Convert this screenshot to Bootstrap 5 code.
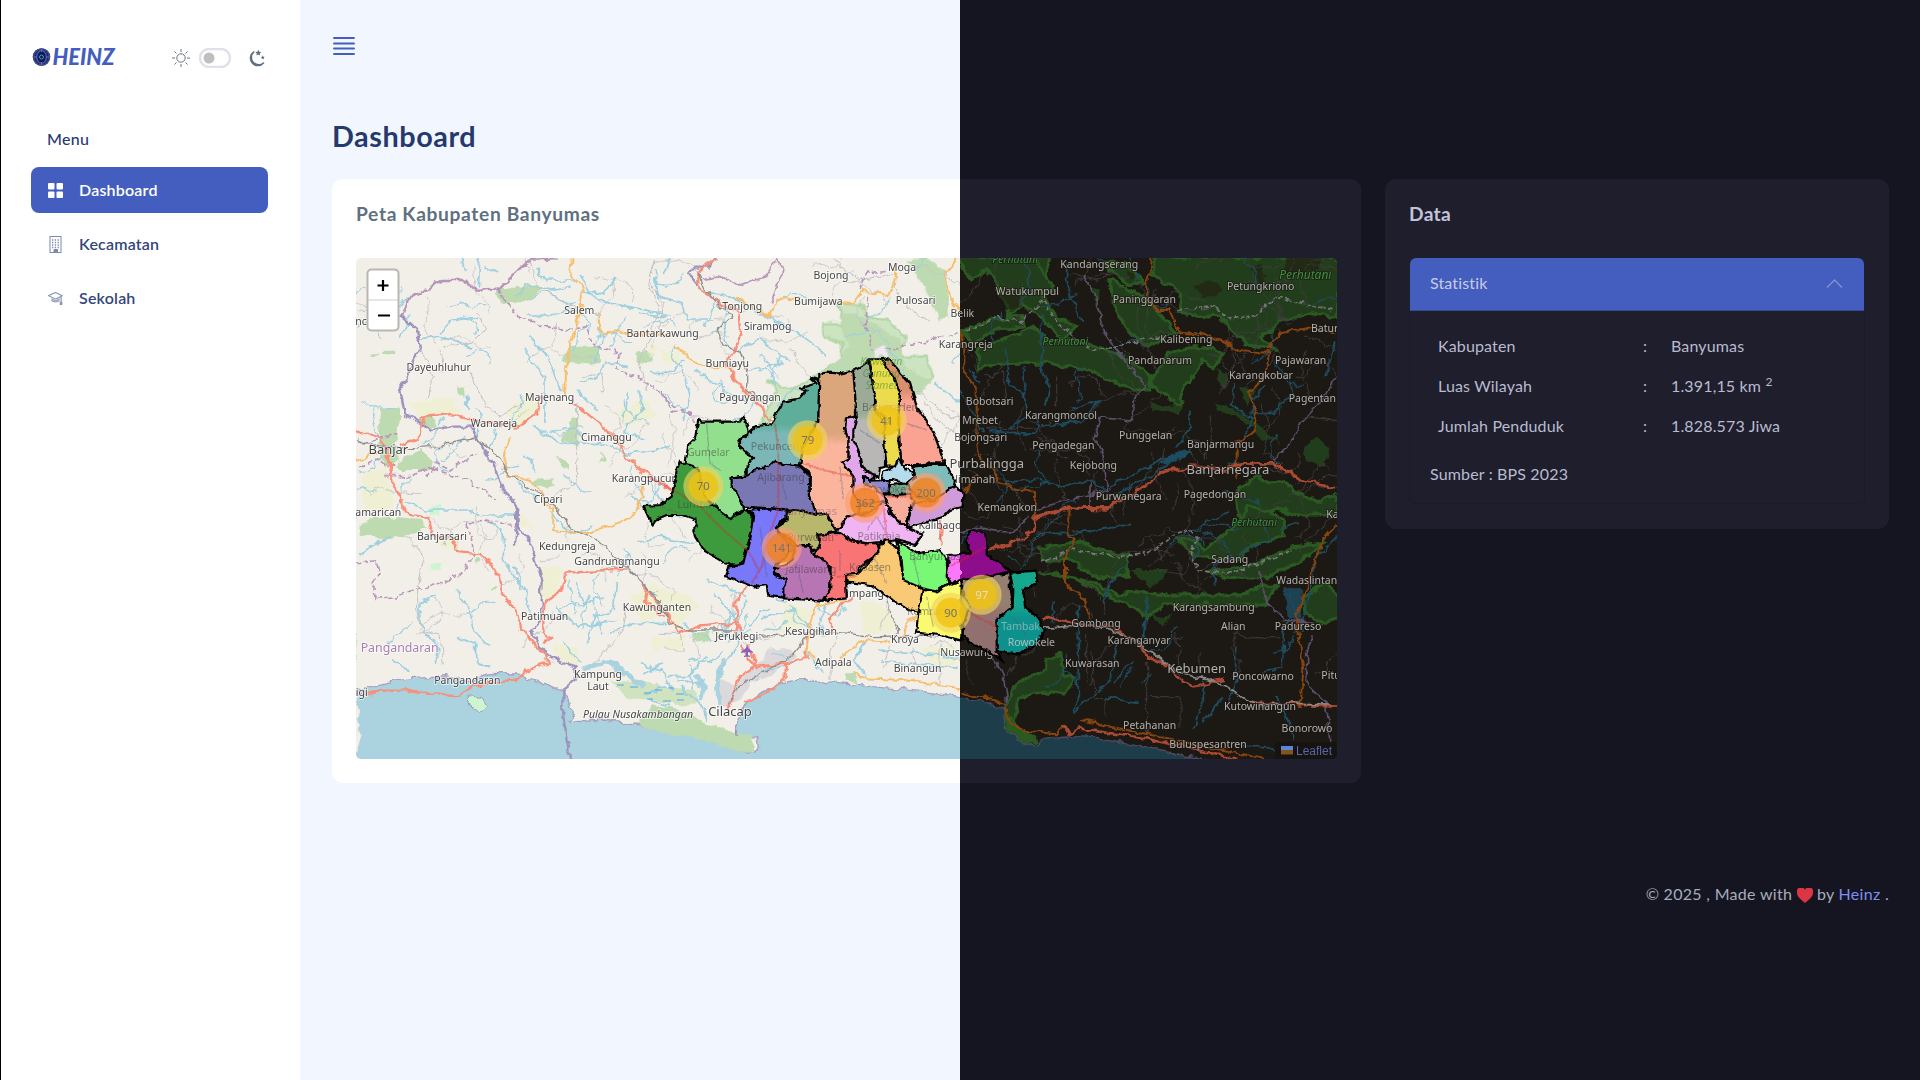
<!DOCTYPE html>
<html lang="id">
<head>
<meta charset="utf-8">
<meta name="viewport" content="width=device-width, initial-scale=1">
<title>Dashboard</title>
<link href="https://cdn.jsdelivr.net/npm/bootstrap@5.3.0/dist/css/bootstrap.min.css" rel="stylesheet">
<style>
body{font-family:Lato,"Open Sans",sans-serif;font-size:16px;letter-spacing:.15px;color:#b9bbcf;background:linear-gradient(90deg,#f2f7ff 960px,#151521 960px);height:1080px;overflow:hidden}
.side{width:300px;height:1080px;background:#fff;border-left:1px solid #000;padding:42px 34px 0 30px}
.brand{width:87px;height:32px}
.brand-name{font:italic 900 22px Lato,sans-serif;fill:#435ebe;letter-spacing:0}
.side-item{width:237px;height:46px;margin-bottom:8px;border-radius:8px;padding:0 17px;color:#34467a;font-weight:600;letter-spacing:.2px;gap:16px}
.side-item.on{background:#435ebe;color:#fff}
.side-title{color:#25396f;padding-left:16px;margin:51px 0 15px;font-weight:500;line-height:27px;letter-spacing:.3px}
.main-col{padding:32px 31px 0 32px}
.page-title{font-size:28.8px;font-weight:700;color:#25396f;line-height:34px;margin:59px 0 26px;letter-spacing:.55px}
.panel{border-radius:11px}
.panel-map{width:1029px;height:604px;padding:24px;background:linear-gradient(90deg,#fff 628px,#1e1e2d 628px)}
.panel-data{width:504px;height:350px;padding:24px;background:#1e1e2d}
.panel-head{font-size:19.2px;font-weight:700;line-height:22px;margin-bottom:33px;letter-spacing:.65px}
.map-box{width:981px;height:501px;border-radius:5px;display:block;letter-spacing:0}
.acc-head{height:53px;margin:0 1px;background:#435ebe;border-bottom:1px solid #374b94;border-radius:6px 6px 0 0;padding:0 20px;color:#c8cbe5;padding-bottom:3px}
.acc-body{border:1px solid #1b1b29;border-top:0;border-radius:0 0 6px 6px;height:193px;padding:15px 20px}
.stat-row{height:40px;padding:0 8px}
.stat-row span:nth-child(1){width:198px}
.stat-row span:nth-child(2){width:35px;padding-left:7px}
.stat-row sup{font-size:12px}
.foot{margin-top:99px;color:#a5adbb;letter-spacing:.3px}
.foot span{color:#7e8ff0}
text{font-family:"Noto Sans",sans-serif}
.lb{font-size:31.5px;text-anchor:middle;fill:#444;stroke:#fff;stroke-opacity:.75;stroke-width:5;paint-order:stroke}
.dk{fill:#b4b2b0;stroke:#1a1612;stroke-opacity:.8}
.faint{fill:#3a3a3a;fill-opacity:.5;stroke:none}
.big{font-size:39px}
.riv{fill:none;stroke:#9ccfe0;stroke-width:5}
.rdk{fill:none;stroke:#1f4d60;stroke-width:5}
.road{fill:none;stroke:#c3c1c5;stroke-width:3}
.rodk{fill:none;stroke:#3e3b3d;stroke-width:3}
.pri{fill:none;stroke:#f98f78;stroke-width:7}
.sec{fill:none;stroke:#f7be6c;stroke-width:6}
.bor{fill:none;stroke:#b795b8;stroke-width:5}
.bnd{fill:none;stroke:#9d93bd;stroke-width:7}
.rail{fill:none;stroke:#8f8d8b;stroke-width:4}
.wood{fill:#bddab1}.yel{fill:#eff0d3}
.dw{fill:#243d1b;stroke:#2b5a22;stroke-width:9}
.dsec{fill:none;stroke:#87440f;stroke-width:6}
.dpri{fill:none;stroke:#ab4a33;stroke-width:8}
.dbor{fill:none;stroke:#5b5069;stroke-width:5}
.dst path{stroke:#000;stroke-width:6.5;stroke-linejoin:round}
.num{font:34px "Noto Sans",sans-serif;text-anchor:middle;fill:#73726c}
</style>
<script src="https://cdn.jsdelivr.net/npm/bootstrap@5.3.0/dist/js/bootstrap.bundle.min.js"></script>
</head>
<body>
<div class="d-flex">
<aside class="side flex-shrink-0">
  <div class="d-flex align-items-center">
    <svg class="brand" viewBox="0 0 87 32"><circle cx="10.500" cy="15" r="8.700" fill="#27276d"/><circle cx="10.500" cy="15" r="8" fill="none" stroke="#32517f" stroke-width="1.500"/><ellipse cx="10.500" cy="15" rx="4.800" ry="6.300" fill="#15144c" stroke="#435ebe" stroke-width="1.300"/><circle cx="10.500" cy="15" r="2" fill="none" stroke="#21b5b0"/><path d="M10.500 7v3M10.500 20v3M3 15h3M15 15h3" stroke="#8358c6"/><text class="brand-name" x="21.500" y="23" textLength="62" lengthAdjust="spacingAndGlyphs">HEINZ</text></svg>
    <div class="d-flex align-items-center ms-auto">
      <svg width="20" height="20" viewBox="0 0 20 20" fill="none" stroke="#6c757d"><circle cx="10" cy="10" r="4.200"/><path d="M10 1v3M10 16v3M1 10h3M16 10h3M3.500 3.500l2 2M14.500 14.500l2 2M3.500 16.500l2-2M14.500 5.500l2-2"/></svg>
      <svg class="ms-2" width="32" height="20" viewBox="0 0 32 20"><rect x="1" y="1" width="30" height="18" rx="9" fill="#fff" stroke="#dfe2ea" stroke-width="2.500"/><circle cx="10" cy="10" r="5.500" fill="#bfbfbf"/></svg>
      <svg style="margin-left:17px" width="18" height="20" viewBox="0 0 18 20"><path d="M5.800 4A7 7 0 0 0 15.500 15 7.400 7.400 0 1 1 5.800 4z" fill="none" stroke="#607080" stroke-width="1.600" stroke-linejoin="round"/><path d="M10.300 1.800l.9 1.900 2 .3-1.400 1.400.3 2-1.800-1-1.800 1 .3-2L7.400 4l2-.3zM14.800 7.600l.6 1.200 1.200.3-.9.900.2 1.200-1.100-.5-1.100.5.200-1.200-.9-.9 1.200-.3z" fill="#607080"/></svg>
    </div>
  </div>
  <div class="side-title">Menu</div>
  <nav>
    <div class="side-item on d-flex align-items-center"><svg width="15" height="15" viewBox="0 0 15 15" fill="#fff"><rect width="6.500" height="6.500" rx="1"/><rect x="8.500" width="6.500" height="6.500" rx="1"/><rect y="8.500" width="6.500" height="6.500" rx="1"/><rect x="8.500" y="8.500" width="6.500" height="6.500" rx="1"/></svg>Dashboard</div>
    <div class="side-item d-flex align-items-center"><svg width="15" height="17" viewBox="0 0 15 17" fill="none" stroke="#7c88b0"><rect x="2" y=".5" width="11" height="16"/><path d="M4 4h7.500M4 6.500h7.500M4 9h7.500M4 11.500h7.500" stroke-width="1.400" stroke-dasharray="1.300 1.500"/><path d="M6 16v-2.500h3.500V16" fill="#7c88b0"/></svg>Kecamatan</div>
    <div class="side-item d-flex align-items-center"><svg width="15" height="15" viewBox="0 0 16 15"><path d="M8 1L.5 4.500 8 8l6-2.700V12M8 1l7 3.500-1 .8" fill="none" stroke="#8792b6" stroke-width="1.200"/><path d="M3.500 7L8 9l4.500-2v3.500Q8 13 3.500 10.500z" fill="#a4adc7"/><path d="M12.500 11h2.800v3.500h-2.800z" fill="#8792b6"/></svg>Sekolah</div>
  </nav>
</aside>
<main class="main-col flex-grow-1">
  <svg class="d-block" width="24" height="28" viewBox="0 0 24 28"><path d="M2 6h20M2 11.500h20M2 16.500h20M2 22h20" stroke="#435ebe" stroke-width="1.900" stroke-linecap="round"/></svg>
  <h3 class="page-title">Dashboard</h3>
  <div class="d-flex justify-content-between align-items-start">
    <section class="panel panel-map">
      <div class="panel-head" style="color:#607080">Peta Kabupaten Banyumas</div>
      <svg class="map-box" viewBox="356 258 981 501">
        <defs>
          <filter id="wob" filterUnits="userSpaceOnUse" x="-1200" y="-100" width="3400" height="1300"><feTurbulence type="fractalNoise" baseFrequency=".09" numOctaves="3" seed="4"/><feDisplacementMap in="SourceGraphic" scale="8.500" xChannelSelector="R" yChannelSelector="G"/></filter>
          <filter id="wob2" filterUnits="userSpaceOnUse" x="-100" y="-100" width="1500" height="1300"><feTurbulence type="fractalNoise" baseFrequency=".05" numOctaves="3" seed="9"/><feDisplacementMap in="SourceGraphic" scale="14" xChannelSelector="R" yChannelSelector="G"/></filter>
          <clipPath id="cl"><rect x="300" y="200" width="660" height="600"/></clipPath>
          <clipPath id="cr"><rect x="960" y="200" width="400" height="600"/></clipPath>
        </defs>
        <rect x="356" y="258" width="604" height="501" fill="#f2efe9"/>
        <rect x="960" y="258" width="377" height="501" fill="#1c1814"/>

        <!-- light half -->
        <g clip-path="url(#cl)">
          <g filter="url(#wob)">
            <g transform="translate(350,250) scale(.33333)">
              <path class="yel" d="M180 460l120-20 40 50-130 20zM470 480l80-60 10 60-60 60zM30 680l80-30 20 130H40zM800 480l90-30 30 50-100 30z"/>
              <path class="wood" d="M440 112l60 5 60-20 20 20-50 40-80 0zM90 480l60-10 0 40-20 70 20 50-40 20-25-60zM210 510l40-10 10 30-50 0zM140 640l70-40 40 40-20 20-90 0zM660 290h90v50h-100l-15-10zM665 500l20 0 0 90-45-20zM860 310l50 0 0 25-50-5zM620 620l40 20 0 20-30-15zM750 600l20 30-15 5zM320 410l20-5 5 35-20-10zM550 690l60-5 0 25-50 0zM65 310h20v8h-20zM100 305h30v10h-30z"/>
            </g>
            <g transform="translate(350,500) scale(.33333)">
              <path class="wood" d="M25 75l60-25 130 10 15 20-60 30-80 10-60-15zM375 178h12v12h-12zM423 262h12v12h-12z"/><path fill="#cdf5cf" d="M242 20h26v25h-26zM242 188h26v27h-26z"/>
              <path class="yel" d="M570 200l70 0-20 80-50 30zM500 30l60 60-50-20zM840 290l80-40 40 80-90 40zM610 430l80 20-10 50-60-30zM260 115l60 0 10 40-50-5z"/>
            </g>
            <g transform="translate(640,250) scale(.33333)">
              <path d="M380 480l30-60-30-30 80 30 80-50 60-40 10-50-60-20 0-40 60 0-10-60 60 0 30 40 60 10 50 60-20 50 80 0 20 60-50 30-60 70-60-20-280 10-80 90z" fill="#cde4c3" stroke="#b3d6a6" stroke-width="7"/>
              <path class="wood" d="M610 190l60 10 60 40 50 30 20 80 60 40-20 50-100-20-100-40-100 30 30-60 60-60-30-50zM800 30l60-10 60 50 10 130-30 10-60-120z"/><path d="M700 300l25-12 22 15-5 18-40 0z" fill="#eee9f0"/>
              <path class="yel" d="M60 300l60 10 0 30-50-5zM20 280l40 10-30 30z"/>
            </g>
            <g transform="translate(640,500) scale(.33333)">
              <path class="yel" d="M60 270l80 10 40 40-80 60-40-40zM40 410l100 0-20 40h-80zM440 310l80 20-40 60h-60zM660 300l100 30 0 70-90 0zM850 440l100 0v60l-90-10z"/>
              <path d="M380 450l60-10 30 30-80 60-60 20zM240 540l50 10 40-50 40-10-70 110-60 30z" fill="#dcd9dc"/>
              <path class="wood" d="M160 400l50-8-10 35h-40zM615 520l30 0 10 30-35-5z"/>
              <path d="M-870 575L-760 548-680 535-580 530-510 545-450 520-370 522-300 545-260 562-230 575-215 600-205 640-215 660-180 665-110 660-30 672 90 695 140 705 220 725 330 760 355 740 350 710 300 715 290 690 290 660 320 610 360 580 440 545 500 535 560 548 700 560 850 575 980 592V860H-890z" fill="#aad3df" stroke="#a9a0bd" stroke-width="4"/>
              <path d="M-860 560l20 60-10 50 15 30-15 60-40 30v-220z" fill="#f2efe9"/>
              <path class="wood" d="M-5 655l50-40 100 20 60 40 80 25 50 5 5 50-20 3-110-30-120-25-95-28z"/>
              <path d="M-520 590l45 5 15 25-18 18-30-15z" fill="#cdf5cf" stroke="#99b" stroke-width="3"/>
              <path d="M-90 545l100 5 60 10 100 10 0 40-60 5-70-15-70-5z" fill="#cfe3bf"/>
              <path d="M-170 510l60-25 40 5 20 30 60 40M250 480l-20 80 10 60M170 520l20 50-10 30" fill="none" stroke="#aad3df" stroke-width="16"/>
            </g>
            <g id="texL"></g>
            <g transform="translate(350,250) scale(.33333)">
              <path class="riv" d="M330 20l15 40M390 20l-5 90M400 50l40 20M500 145l30-45 70 20 60-10M540 150l40-25 90 40-60 30-80 0M560 60l30 30 90 0M690 75l30 60 40-10 40-35M700 125l60 30 200 40M915 80l10 60 40 10M210 270l50-10 70 15 40 20M270 250l50-50 60 5M535 260l60 60 20 60 25 40M525 290l20 40 40 50 0 60 0 80M550 520l40 40 60 20 100 0 80 30 130-20M690 400l50-20 30-40 60 10M680 420l60 60M830 430l-10 90M870 420l10 60-60 60 60 30M520 620l30 20 0 30M350 440l5 40M500 700l60 50M420 600l20-60M840 730l40 40M180 200l-30 60"/>
              <path class="bnd" d="M150 195l50 40 10 60-25 60-35 60 15 80 40 20 40 25 60-10 60 0 30 60 40 60 20 70 50 50-10 120"/>
              <path class="bnd" style="stroke:#b795b8" d="M155 195l15-45 110-60 60 0 30 30 80-5 60-60 30-25 80-5"/>
              <path class="bor" stroke-dasharray="16 7" d="M450 115l10 30 50 60 140 35 60-10 20 60 80 20-10 50 80 30 100 80M40 580l100-30M100 680l90 0 40-30 120 40 90 60M230 680l30-40 40 20 80-50M30 650l60-20 40 20"/>
              <path class="sec" d="M665 20l-5 60 38 35-8 70-25 80-15 60-5 110M740 190l15 55 200 10M20 630l60-20M480 560l-20 70 15 50 70 10 60 90M880 700l-10 80"/>
              <path class="pri" d="M18 540l60 20 30 30 20 110 35 70M150 585l55-20 15-60 80-10 90 20 110 18 60-40 10-55M670 460l80 60 60 60 20 40 70 60 60 40"/>
              <path class="rail" d="M18 570l100 25 130-5 130-25 60 50 40 60 150 100"/>
              <path class="road" d="M540 30l20 70 120 80M910 30l-10 80 30 60-60 160 20 90M280 290l80-10 50-40-30-50M270 300l10 70M360 370l50 100 40 30 90-60M210 290l40 90-20 60M680 460l0 240-90 50M700 380l60-10 0 60"/>
            </g>
            <g transform="translate(350,500) scale(.33333)">
              <path class="riv" d="M30 160l90-50M170 10l60 20 120 0 60 15 90 0M410 60l50 40 0 80 70 100 10 60M490 200l20 30 0 40M260 285l-50 20 0 70 50 60 0 60M320 270l40 60 10 60 50 50M320 410l60 20 0 60 40 10M130 480l50 30M600 40l70 60 60-20M680 250l20 60 60-20M800 240l-10 90-60 20-20 80M620 320l60 60 120-20M640 430l50 60M780 400l80-30 90 0M880 520l60-30M880 580l70-20"/>
              <path class="bnd" d="M495 0l10 80 40 60 30 100-5 120-30 30 30 50 50 40 60 20 0 40-40 30 0 80 20 130"/>
              <path class="bor" stroke-dasharray="16 7" d="M18 195l60-10 10 30-15 30 5 50 60-5 80-25 110-40 45-60-20-100 90 0 60 20"/>
              <path class="pri" d="M160 0l0 40 75 15 10 50 60 5 15 42 75 10 55 70 10 50 40 50 10 50 50 60 30 20 0 30-60 20-30 30-60 5-60 10-50 30-150-15-80 0-100 20-80 30M580 430l20-20-20-10 0-90 60-40 5-55 120-5 70 2M890 275l-5 30 60 50"/>
              <path class="sec" d="M610 20l-5 70 120 10 80-30 60-40 10-30"/>
              <path class="rail" d="M610 15l60 75 70 30 100 90 110 120"/>
              <path class="road" d="M170 110l50 60-20 130 10 80 60 30 10 80M280 140l20-50 60-30M830 320l-10 70-40 50-50 50"/>
            </g>
            <g transform="translate(640,250) scale(.33333)">
              <path class="riv" d="M50 60l0 70 70 30 20 50 80 0M200 130l80 10 100 60 80 40 60 40 40 40M100 20l-30 50M30 370l60 0 40-40M160 360l100 60 60 40M130 360l20 80-20 70M280 300l80-30 60 40 30 20M880 400l80 60M0 190l80 10"/>
              <path d="M230 20l-20 30-50 0-15 20 40 50" class="bnd"/>
              <path class="bor" d="M180 90l60-10 60 25 80-25 30-50 20 30-40 100"/>
              <path class="bor" stroke-dasharray="16 7" d="M660 120l20-50 60-10M685 140l-5 90 20 70M740 300l100-20 120-30M60 420l40 60 50 10 20 30"/>
              <path class="sec" d="M100 290l60 40 50 25 80 0M290 140l100 60 20-50 70-5M570 150l70 10 30-40 70 15 25-30 5-60M950 25l-35 50 20 70 40 70"/>
              <path class="pri" d="M235 25l-60 40 0 50 60 40 60 30 5 60-20 60-20 40 20 40 120 130"/>
              <path class="rail" d="M175 70l20 50 80 80-40 40 15 50 50 10 20 60 0 60 60 50"/>
              <path class="road" d="M40 30l-10 70 40 60-10 100M580 30l80 60 100-20M760 100l30 60 80 60M450 300l60 80M830 420l80 70 50 20M850 450l40 60 60 40"/>
            </g>
            <g transform="translate(640,500) scale(.33333)">
              <path class="riv" d="M0 130l60-20 80 20 30-10M200 240l60 20 60 30M220 280l60 60 10 40 0 60-50 80M250 450l-40 40-60-10M360 360l100-30 60 60M560 310l-20 60 10 40M450 320l20 50 40 10M200 470l-60 60-70 0M680 420l-40 60 40 50M720 450l120 10 110 10M720 480l230 25M500 460l50 60M330 130l-10 60M0 490l60 20 40 60M30 600l60 20M120 560l60 50 20 50"/>
              <path class="bnd" d="M292 690l5 20"/>
              <path class="pri" d="M0 250l70 80 50 70 50-20 100-10 30 0M285 400l10-60-15-30 45-55 40-90M330 430l20 60-50 35-15 50-20 60M300 440l50 60 90-10 0 40-60 50-70 30M430 495l70-15 0-70M640 290l-70 60 0 30M910 80l-10 60M290 370l20 50"/>
              <path class="sec" d="M620 300l-90 20-20 50-10 80 30 30M600 475l70-55 80 5M640 515l30 20 120 5 170 25M840 340l-40 30-10 50"/>
              <path class="rail" d="M0 240l60 70 30 60 50 20 140 0M350 410l230-15 120 15 180-5M500 410l-60 70-80 40-60 40-40 60M710 220l65 180"/>
              <path class="road" d="M60 400l60 0 10 50-60 0M720 260l30 60-30 70M600 400l-30 60 0 80M860 400l100 20M750 430l-20 70M820 440l0 60M900 430l0 120"/>
            </g>
          </g>
          <g stroke="#4aa5ee" stroke-width="1"><path d="M617 685h7M630 687h8M655 690h7M668 688h6M676 694h8M663 701h8M644 693h7M647 699h6M677 700h7"/></g>
          <path d="M747 644l1 4 5 4v1l-5-1v3l2 1v1l-3-.500-3 .500v-1l2-1v-3l-5 1v-1l5-4z" fill="#8461c4"/>
        </g>

        <!-- dark half -->
        <g clip-path="url(#cr)">
          <g filter="url(#wob)">
            <g transform="translate(950,250) scale(.33333)">
              <path class="dw" d="M20 20h230l60 90-30 30 40 60 60 30-40 40-60-60-60-50-40 40-20-60-50-80-50 30zM250 20h50l-10 60zM40 240l80-30 100-10 0 30-80 10-80 40zM85 300l120-50 50-20 40 40 120 10 130 50 60 50 0 40-60 0-130-60-120-20-170 0-40 20zM465 40l60 0 60 60-60 0zM480 90l100 50 60 60 40 50-90 40-60-50-40-80zM620 20h545v180l-90-10-80 20-60 50 40 40-90-20-80-80-120-10 10-60-90-60zM600 400l60-100 60-10 60 0 40 20-30 50-30-30-60 90-10 50z"/>
              <path d="M1000 20l10 60 100-20 0-40zM730 110l60-20 30 30-60 30zM900 60l30-20 20 40-20 20zM130 130l60-10 30 50-60 10zM530 60l30 20-20 10z" fill="#1c1814" opacity=".5"/>
              <path fill="#243d1b" d="M600 460l100 10-10 20-80-10zM800 460l80 30 110 90-60-20-70-60-60-20zM1060 590l40-30 40 30-20 60-50-20zM800 360l30 10-10 50zM870 410l50 10-30 50zM420 110l30 10-10 50z"/>
              <path class="dw" d="M860 720l60-45 20 20 60 0 40 30 60 30 60-20v60l-120 0-60-20-60 40H870z"/>
            </g>
            <g transform="translate(950,500) scale(.33333)">
              <path class="dw" d="M265 145l130-20 70 30 70 10 0 60-90 10-90-60-80 10zM265 215l100 20 80 20 60 30 60-10 90 10 220 0 60-30 50 0-40 60-180 0-120 0-60 40-20-30-80-30-110-60zM680 120l60 0 20 30 80-60 60-70 100 30 0 60-80 20-60 50-120-10zM780 210l120-10 130-60 90-10-60 50-130 60-110-10zM1060 290l60-40 45 30v70l-40 20-60-30zM170 640l10-60 50-50 60-20 0-30 40-15 10 60 35 10-30 50-60-10-80 20-10 80 60 40-40 20-55-60z"/>
              <path fill="#243d1b" d="M540 210l120 0-60 50zM600 340l60 10-20 30z"/>
              <path d="M20 587L120 610 170 628 160 680 200 722 260 738 285 715 350 708 420 712 560 737 680 762 770 782V830H0z" fill="#1d3e49" stroke="#4d4a63" stroke-width="4"/>
              <path d="M165 640l5 40 40 42 55 12-10-20-50-30-20-40z" fill="#2b5a22"/>
              <path fill="#1f4353" d="M1000 265l60 0-10 100-40-15z"/>
            </g>
            <g id="texR"></g>
            <g transform="translate(950,250) scale(.33333)">
              <path class="rdk" d="M220 20l20 90-30 50M350 40l0 50 30 100 20 30M275 190l0 160 20 60-10 60M165 290l10 60 0 50 50 40 10 60-60 30M220 350l10 130M120 545l140 5 0-50M270 525l120-10 60-60-80 20M170 700l100-10 80 20 60-20 60 30 100-60 130-60 30 10M720 480l0 50-40 60M1155 270l-30 110M850 400l0 70 60 30-30 70M940 410l-30 40 0 40 60 0 50-50M830 640l130 0M20 400l80 150M60 360l30 40M500 730l60-30 120-70M1020 380l10 60"/>
              <path d="M630 640l30-25 70-20-20 20-50 25z" fill="#1f4d60"/>
              <path class="dbor" d="M400 70l40 80 20 100 130 160-35 30-10 70-90-10-20 60 20 50 15 110-110 30-120 30M1160 380l-50 80-60 60-20 50-60 60M420 700l0 70"/>
              <path class="dbor" stroke-dasharray="14 7" style="stroke:#74767c" d="M50 240l100-40 60 20 70-70 30 50 60 60 60 40 80-10 60-20 60-10M680 180l120-10 30 40 90-10 50-60 180 40"/>
              <path class="dsec" d="M605 20l-15 110 30 50 40 0 30 70 60 0 60 20 60 30 90 10-10 60-50 60 20 60-10 60-50 30 0 110M950 300l40-50 100-20 60 20M20 180l20 80 0 100 40 60 0 150 15 80 40 0 0 50 120 30 0 70M80 670l-40 60"/>
              <path class="dpri" d="M250 805l100-30 120 0 90-50 80-60 80-15 100 5 60-15 90 0 80 50 110 25"/>
              <path class="rodk" d="M70 540l200-10 100-50 60 30M240 600l200 0M260 560l150 60 10 60M30 430l-10-40M100 380l60-10 10 80M320 380l0 90M640 600l-20 90 30 60M780 500l10 70-30 60M690 700l-20 90M540 700l-20 90M1060 500l100 10M940 600l20-80-30-60M850 290l0 80-30 40"/>
            </g>
            <g transform="translate(950,500) scale(.33333)">
              <path class="rdk" d="M260 100l60 0 60 0 100-20 60 0M310 310l0 60M385 310l0 290-20 40M500 430l-20 110-110 100M550 480l-60 70M590 290l-10 130M460 590l100 20M540 180l-60 70-20 60M760 540l0 60-30 90M820 590l-60 80M940 520l60-20 0-100 20-50M860 430l0 120-40 80M1060 370l40-200 60-60M980 590l40 80 10 50M1080 560l60 60M800 260l-10-60 180-90M880 740l60 0 30 20M740 120l0 60M990 90l60-20"/>
              <path class="dbor" d="M30 100l60-20 90 20 60-50M930 210l10 80 60 70 90 10M1090 400l-20 60 0 90 60 60 10 120M130 470l30 60 10 80"/>
              <path class="dbor" stroke-dasharray="14 7" style="stroke:#77777c" d="M270 190l100-40 130 20 100-10 60-50 60-20 30 30-30 30 30 60 100 10 180-70"/>
              <path class="dsec" d="M355 25l0 80 20 10-30 60 0 80 60 40 10 60M1160 70l-40 50-30 80-30 90-20 60 10 80 10 80-10 120M40 575l130 38 10 60 60 20 80 10 30-30M390 660l560 118"/>
              <path class="dpri" d="M110 148l80-20 60-35 10-45 100-25 110 5 50-25M45 370l70 15M275 360l20-12 100 28 90 5 80 50 30 40 50 20 50 55 40 10 90-20M345 675l10 25 30-15 200 30 280 62M900 608l265 12"/>
              <path class="rail" style="stroke:#888;stroke-width:5" d="M285 385l60-5 100 0 90 30 60 40 80 60 90 25 60 20 60 40 40 15 220 5"/>
              <path class="rodk" d="M210 50l0 110 80 10M410 400l0 150M425 450l10 140 30 10 0 50M590 480l0 220M750 460l0 60M680 400l10 150M600 590l90 0 0 90M640 420l60-10M200 470l-30 60M500 180l-30 90M850 400l60 20 80-10M480 20l20 50M600 120l40 60"/>
            </g>
          </g>
        </g>

        <!-- place labels -->
        <g transform="translate(350,250) scale(.33333)">
          <text class="lb" x="42" y="225">nca</text><text class="lb" x="688" y="192">Salem</text><text class="lb" x="266" y="362">Dayeuhluhur</text><text class="lb" x="599" y="452">Majenang</text><text class="lb" x="432" y="532">Wanareja</text><text class="lb big" x="115" y="613">Banjar</text><text class="lb" x="769" y="573">Cimanggu</text><text class="lb" x="894" y="696">Karangpucung</text><text class="lb" x="594" y="759">Cipari</text>
          <text class="lb" x="938" y="260">Bantarkawung</text>
        </g>
        <g transform="translate(350,500) scale(.33333)">
          <text class="lb" x="85" y="48">amarican</text><text class="lb" x="276" y="121">Banjarsari</text><text class="lb" x="652" y="150">Kedungreja</text><text class="lb" x="801" y="194">Gandrungmangu</text><text class="lb" x="584" y="359">Patimuan</text><text class="lb" style="font-size:37px;fill:#a77fae" x="149" y="457">Pangandaran</text><text class="lb" x="352" y="552">Pangandaran</text><text class="lb" x="35" y="589">igi</text><text class="lb" x="744" y="533">Kampung</text><text class="lb" x="744" y="570">Laut</text><text class="lb" font-style="italic" x="864" y="655">Pulau Nusakambangan</text><text class="lb" x="921" y="334">Kawunganten</text>
        </g>
        <g transform="translate(640,250) scale(.33333)">
          <text class="lb" x="573" y="87">Bojong</text><text class="lb" x="786" y="64">Moga</text><text class="lb" x="307" y="180">Tonjong</text><text class="lb" x="535" y="164">Bumijawa</text><text class="lb" x="827" y="163">Pulosari</text><text class="lb" x="383" y="241">Sirampog</text><text class="lb" x="262" y="352">Bumiayu</text><text class="lb" x="330" y="453">Paguyangan</text>
        </g>
        <g transform="translate(640,500) scale(.33333)">
          <text class="lb" x="290" y="420">Jeruklegi</text><text class="lb" x="513" y="404">Kesugihan</text><text class="lb" x="795" y="430">Kroya</text><text class="lb" x="580" y="497">Adipala</text><text class="lb" x="833" y="515">Binangun</text><text class="lb big" x="270" y="649">Cilacap</text><text class="lb" x="662" y="290">Sampang</text>
        </g>
        <g transform="translate(950,250) scale(.33333)">
          <text class="lb dk" style="fill:#409044" font-style="italic" x="195" y="40">Perhutani</text><text class="lb dk" x="448" y="55">Kandangserang</text><text class="lb dk" x="232" y="136">Watukumpul</text><text class="lb dk" x="583" y="158">Paninggaran</text><text class="lb dk" x="932" y="119">Petungkriono</text><text class="lb dk" style="fill:#409044;font-size:36px" font-style="italic" x="1066" y="86">Perhutani</text><text class="lb dk" style="fill:#409044" font-style="italic" x="346" y="284">Perhutani</text><text class="lb dk" x="709" y="279">Kalibening</text><text class="lb dk" x="1124" y="247">Batur</text><text class="lb dk" x="630" y="342">Pandanarum</text><text class="lb dk" x="1052" y="341">Pajawaran</text><text class="lb dk" x="933" y="388">Karangkobar</text><text class="lb dk" x="1087" y="456">Pagentan</text><text class="lb dk" x="119" y="465">Bobotsari</text><text class="lb dk" x="90" y="523">Mrebet</text><text class="lb dk" x="333" y="506">Karangmoncol</text><text class="lb dk" x="587" y="568">Punggelan</text><text class="lb dk" x="340" y="598">Pengadegan</text><text class="lb dk" x="812" y="594">Banjarmangu</text><text class="lb dk" x="430" y="656">Kejobong</text><text class="lb dk big" x="834" y="671">Banjarnegara</text><text class="lb dk" x="536" y="751">Purwanegara</text><text class="lb dk" x="795" y="745">Pagedongan</text><text class="lb dk" x="172" y="783">Kemangkon</text><text class="lb dk" x="1147" y="803">Ka</text>
        </g>
        <g transform="translate(950,500) scale(.33333)">
          <text class="lb dk" style="fill:#409044" font-style="italic" x="912" y="79">Perhutani</text><text class="lb dk" x="839" y="190">Sadang</text><text class="lb dk" x="1080" y="253">Wadaslintang</text><text class="lb dk" x="791" y="334">Karangsambung</text><text class="lb dk" x="850" y="391">Alian</text><text class="lb dk" x="1044" y="390">Padureso</text><text class="lb dk" x="438" y="380">Gombong</text><text class="lb dk" x="567" y="433">Karanganyar</text><text class="lb dk" x="427" y="500">Kuwarasan</text><text class="lb dk big" x="740" y="519">Kebumen</text><text class="lb dk" x="939" y="541">Poncowarno</text><text class="lb dk" x="1143" y="536">Pitu</text><text class="lb dk" x="930" y="630">Kutowinangun</text><text class="lb dk" x="599" y="686">Petahanan</text><text class="lb dk" x="1071" y="697">Bonorowo</text><text class="lb dk" x="774" y="745">Buluspesantren</text>
        </g>
        <g clip-path="url(#cl)"><g transform="translate(950,250) scale(.33333)"><text class="lb" x="37" y="202">Belik</text><text class="lb" x="47" y="293">Karangreja</text><text class="lb" x="92" y="573">Bojongsari</text><text class="lb big" x="110" y="653">Purbalingga</text><text class="lb" x="57" y="700">Kalimanah</text><text class="lb" x="-24" y="837">Kalibagor</text><text class="lb" x="60" y="1219">Nusawungu</text></g></g>
        <g clip-path="url(#cr)"><g transform="translate(950,250) scale(.33333)"><text class="lb dk" x="37" y="202">Belik</text><text class="lb dk" x="47" y="293">Karangreja</text><text class="lb dk" x="92" y="573">Bojongsari</text><text class="lb dk big" x="110" y="653">Purbalingga</text><text class="lb dk" x="57" y="700">Kalimanah</text><text class="lb dk" x="60" y="1219">Nusawungu</text></g></g>

        <!-- districts -->
        <defs>
          <linearGradient id="g1" x2="0" y2="1"><stop offset=".48" stop-color="#5fae99"/><stop offset=".56" stop-color="#7ab7b6"/></linearGradient>
          <linearGradient id="g2" x2="0" y2="1"><stop offset=".4" stop-color="#dca67c"/><stop offset=".47" stop-color="#fab59c"/></linearGradient>
          <linearGradient id="g3" x2="0" y2="1"><stop offset=".46" stop-color="#9bab98"/><stop offset=".52" stop-color="#b9b7b5"/></linearGradient>
          <linearGradient id="g4" x2="0" y2="1"><stop offset=".3" stop-color="#d98e6c"/><stop offset=".4" stop-color="#faa393"/></linearGradient>
          <linearGradient id="g5" gradientUnits="userSpaceOnUse" x1="920" x2="1000" y1="0" y2="0"><stop offset=".5" stop-color="#fb78fa"/><stop offset=".5" stop-color="#8e0c8d"/></linearGradient>
          <linearGradient id="g6" gradientUnits="userSpaceOnUse" x1="920" x2="1000" y1="0" y2="0"><stop offset=".5" stop-color="#faf972"/><stop offset=".5" stop-color="#8c7e1c"/></linearGradient>
          <linearGradient id="g7" x2="0" y2="1"><stop offset=".35" stop-color="#947f70"/><stop offset=".5" stop-color="#926f70"/></linearGradient>
          <linearGradient id="g8" x2="0" y2="1"><stop offset=".4" stop-color="#14a88c"/><stop offset=".6" stop-color="#0e918d"/></linearGradient>
        </defs>
        <g transform="translate(640,350) scale(.33333)">
          <g class="dst" filter="url(#wob2)">
            <path fill="#e0a8e8" d="M618 205L650 200 640 270 655 300 665 350 690 370 705 365 700 385 672 395 740 400 740 450 640 470 640 380 605 335 625 325 625 270 615 235z"/>
            <path fill="url(#g1)" d="M300 270L350 228 395 222 410 190 430 155 480 145 500 122 480 115 530 100 510 82 538 90 535 215 500 270 490 290 480 350 450 352 420 340 385 350 320 380 320 350 340 325 300 290z"/>
            <path fill="url(#g2)" d="M538 72L560 68 600 70 645 60 648 200 618 205 615 235 625 270 625 325 605 335 640 380 640 430 660 470 655 500 620 500 620 520 590 540 565 515 560 495 530 495 520 460 508 450 510 370 480 345 490 290 535 215z"/>
            <path fill="url(#g3)" d="M640 65L685 35 705 140 705 180 735 220 735 350 720 355 715 382 690 370 665 350 655 300 640 270 640 240 650 200 645 130z"/>
            <path fill="url(#g4)" d="M725 28L745 25 775 60 780 70 810 100 830 170 870 230 885 260 900 300 915 340 870 340 830 345 785 345 780 300 775 200 780 130 765 90z"/>
            <path fill="#ebdc4d" d="M685 28L725 28 765 90 780 130 775 200 775 270 785 335 765 350 740 350 735 300 730 250 745 210 710 180 705 140 695 80z"/>
            <path fill="#92e08d" d="M175 210L185 215 300 215 310 200 325 235 325 255 295 270 300 290 340 325 320 350 315 380 275 385 290 430 300 450 310 480 270 505 225 470 195 440 160 355 135 350 145 285 165 265z"/>
            <path fill="#3c9a3c" d="M120 335L175 355 195 440 225 470 270 505 320 480 340 490 335 530 325 580 310 630 295 645 255 640 190 600 165 560 160 540 170 530 170 510 130 495 80 495 45 510 38 530 10 468 60 465 95 440 105 390 110 360z"/>
            <path fill="#7a77b5" d="M275 385L320 380 340 360 385 350 400 335 440 345 480 350 505 370 510 440 530 495 490 490 470 480 390 475 310 470 290 430 275 405z"/>
            <path fill="#7878f8" d="M320 480L390 475 440 482 440 510 420 515 410 540 450 585 470 590 405 650 405 675 440 690 430 735 425 742 385 738 380 705 345 712 255 678 265 650 310 640 325 580 335 530 340 490z"/>
            <path fill="#b9b76c" d="M440 485L470 480 530 495 560 490 575 520 590 545 535 555 540 590 515 602 510 585 470 585 415 545 410 530 440 510z"/>
            <path fill="#f97474" d="M535 555L600 548 640 575 710 580 715 610 660 650 650 672 618 675 620 745 550 752 570 720 572 650 520 610 540 590z"/>
            <path fill="#b874b4" d="M470 585L510 588 515 610 560 635 572 670 570 720 550 752 430 745 430 710 440 690 405 670 405 655 450 640z"/>
            <path fill="#efb4f1" d="M620 500L680 490 740 450 750 490 780 520 830 545 850 550 825 585 770 570 740 575 680 580 640 572 590 545z"/>
            <path fill="#f9c976" d="M740 570L775 600 790 680 850 720 840 785 805 780 720 725 690 705 620 695 618 675 650 672 715 610 715 585z"/>
            <path fill="#78f874" d="M768 572L800 590 830 610 900 600 920 630 925 700 890 725 845 715 790 690 785 630z"/>
            <path fill="#b4dcec" d="M730 365L765 350 775 325 790 350 820 370 825 380 800 400 760 390 725 390z"/>
            <path fill="#7dbcb8" d="M820 350L870 345 920 345 945 395 940 410 880 450 830 440 800 400 825 380z"/>
            <path fill="#cf9bd9" d="M880 450L945 408 970 430 968 470 930 480 910 500 850 520 800 535 810 490 820 460z"/>
            <path fill="#f8ae9c" d="M730 435L800 425 825 450 805 490 800 530 770 510 745 470z"/>
            <path fill="#8c8ad2" d="M672 375L690 392 745 390 750 430 720 430 700 410 672 400z"/>
            <path fill="#74a58c" d="M750 405L800 400 820 430 750 437z"/>
            <path fill="url(#g5)" d="M925 615L990 610 980 580 985 550 1000 540 1035 550 1040 590 1040 615 1085 640 1110 665 1060 675 1000 690 960 690 930 705 920 680 925 640z"/>
            <path fill="url(#g6)" d="M848 720L890 725 925 705 965 690 970 740 990 770 965 830 965 872 900 855 828 848 835 790z"/>
            <path fill="url(#g7)" d="M965 690L1060 678 1108 668 1110 720 1118 770 1070 810 1072 905 1090 935 1050 905 1000 885 968 855 970 820 990 770 970 740z"/>
            <path fill="url(#g8)" d="M1110 668L1190 662 1188 700 1150 720 1155 770 1190 800 1215 840 1190 880 1140 910 1070 905 1070 810 1118 770 1120 720z"/>
          </g>
          <g filter="url(#wob)" fill="none" stroke-width="4" opacity=".35"><path stroke="#d22" stroke-width="6" d="M20 380l80 40 80 50 60 60 90 80 30 60M490 340l60 20 90 20M405 220l10 80 0 180-30 80-20 90-30 50M590 680l60 0M740 440l60 0 60-10M900 510l0 60M930 650l110-60M990 790l80 40M730 460l10 100"/><path stroke="#557" d="M200 220l10 120 30 20M60 470l60 20M420 370l20 80M600 350l10 100M660 240l60 40M800 220l60 20M680 540l30-40 30 50M360 530l20 150M470 640l20 90M820 620l20 90M860 740l20 90M600 600l0 60M700 620l40 80M1120 800l40 60"/></g>
          <text class="lb faint" x="205" y="318">Gumelar</text><text class="lb faint" x="405" y="299">Pekuncen</text><text class="lb faint" x="423" y="394">Ajibarang</text><text class="lb faint" x="165" y="474">Lumbir</text><text class="lb faint" style="fill:#8e5a80;font-size:35px" x="505" y="496">Banyumas</text><text class="lb faint" x="512" y="574">Purwojati</text><text class="lb faint" x="513" y="670">Jatilawang</text><text class="lb faint" x="717" y="569">Patikraja</text><text class="lb faint" x="690" y="662">Kebasen</text><text class="lb faint" x="885" y="630">Banyumas</text><text class="lb faint" x="882" y="795">Kemranjen</text><text class="lb faint" x="750" y="184">Baturraden</text><text class="lb faint" x="755" y="430">Purwokerto</text><text class="lb faint" x="1142" y="840" style="fill:#ddd">Tambak</text><text class="lb faint" x="1174" y="889" style="fill:#ccc;fill-opacity:.8">Rowokele</text>
          <g font-style="italic"><text class="lb faint" style="fill:#2a8a20" x="724" y="46">Kawasan</text><text class="lb faint" style="fill:#2a8a20" x="724" y="82">Gunung</text><text class="lb faint" style="fill:#2a8a20" x="724" y="118">Slamet</text></g>
          <!-- marker clusters -->
          <g fill="#f1d357" fill-opacity=".65"><circle cx="190" cy="409" r="60"/><circle cx="503" cy="271" r="60"/><circle cx="740" cy="212" r="60"/><circle cx="932" cy="788" r="60"/><circle cx="1025" cy="734" r="60"/></g>
          <g fill="#f0c20c" fill-opacity=".75"><circle cx="190" cy="409" r="45"/><circle cx="503" cy="271" r="45"/><circle cx="740" cy="212" r="45"/><circle cx="932" cy="788" r="45"/><circle cx="1025" cy="734" r="45"/></g>
          <g fill="#fd9c73" fill-opacity=".65"><circle cx="425" cy="594" r="60"/><circle cx="675" cy="458" r="60"/><circle cx="858" cy="428" r="60"/></g>
          <g fill="#f18017" fill-opacity=".75"><circle cx="425" cy="594" r="45"/><circle cx="675" cy="458" r="45"/><circle cx="858" cy="428" r="45"/></g>
          <text class="num" x="190" y="421">70</text><text class="num" x="503" y="283">79</text><text class="num" x="740" y="224">41</text><text class="num" x="932" y="800">90</text><text class="num" style="fill:#e2dfcb" x="1025" y="746">97</text><text class="num" x="425" y="606">141</text><text class="num" x="675" y="470">362</text><text class="num" x="858" y="440">200</text>
        </g>
        <!-- zoom control and attribution -->
        <rect x="367.500" y="269.500" width="31" height="61" rx="4" fill="#fff" stroke="#b9b7b2" stroke-width="2"/><path d="M368 300h30" stroke="#ccc"/><path d="M377.500 285.500h11M383 280v11M378 315.500h12" stroke="#000" stroke-width="2.200"/>
        <rect x="1275" y="742" width="62" height="17" fill="#15130f" opacity=".85"/><path d="M1281 746h12v4h-12z" fill="#5a86dc"/><path d="M1281 750h12v4.500h-12z" fill="#80561c"/>
        <text x="1296" y="754.500" style="font:12px 'Liberation Sans',Arial,sans-serif;fill:#5a66a8">Leaflet</text>
      </svg>
    </section>
    <section class="panel panel-data">
      <div class="panel-head" style="color:#c2c2d9;letter-spacing:.3px">Data</div>
      <div class="acc-head d-flex align-items-center justify-content-between"><span>Statistik</span><svg width="19" height="12" viewBox="0 0 19 12"><path d="M2 10.500L9.500 3l7.500 7.500" fill="none" stroke="#8391d0" stroke-width="1.400"/></svg></div>
      <div class="acc-body">
        <div class="stat-row d-flex align-items-center"><span>Kabupaten</span><span>:</span><span>Banyumas</span></div>
        <div class="stat-row d-flex align-items-center"><span>Luas Wilayah</span><span>:</span><span>1.391,15 km <sup>2</sup></span></div>
        <div class="stat-row d-flex align-items-center"><span>Jumlah Penduduk</span><span>:</span><span>1.828.573 Jiwa</span></div>
        <div style="margin-top:16px">Sumber : BPS 2023</div>
      </div>
    </section>
  </div>
  <div class="foot text-end">© 2025 , Made with <svg width="16" height="15" viewBox="0 0 16 15"><path d="M8 15C2 10 0 8 0 4.500A4.200 4.200 0 0 1 8 2a4.200 4.200 0 0 1 8 2.500C16 8 14 10 8 15z" fill="#dc3545"/></svg> by <span>Heinz</span> .</div>
</main>
</div>
<script>
// Minor roads and streams: short seeded random walks kept on land
let seed=7;const rnd=()=>(seed=(seed*16807)%2147483647)/2147483647;
function walks(id,n,x0,x1,yMax,cls,w,len){
  const g=document.getElementById(id);
  for(let i=0;i<n;i++){
    let x=x0+rnd()*(x1-x0),y=262+rnd()*(yMax-262),a=rnd()*6.28,d='M'+x.toFixed(1)+' '+y.toFixed(1);
    for(let k=0;k<len;k++){a+=(rnd()-.5)*1.5;x+=Math.cos(a)*6;y+=Math.sin(a)*6;if(y>yMax)break;d+='L'+x.toFixed(1)+' '+y.toFixed(1)}
    const p=document.createElementNS('http://www.w3.org/2000/svg','path');
    p.setAttribute('d',d);p.setAttribute('class',cls);p.style.strokeWidth=w;g.append(p);
  }
}
walks('texL',70,356,960,665,'road',.8,9);
walks('texL',75,356,960,668,'riv',1.2,6);
walks('texL',25,660,800,690,'riv',1.5,5);
walks('texR',95,960,1337,690,'rodk',.9,9);
walks('texR',35,960,1337,690,'rdk',1.2,7);
</script>
</body>
</html>
